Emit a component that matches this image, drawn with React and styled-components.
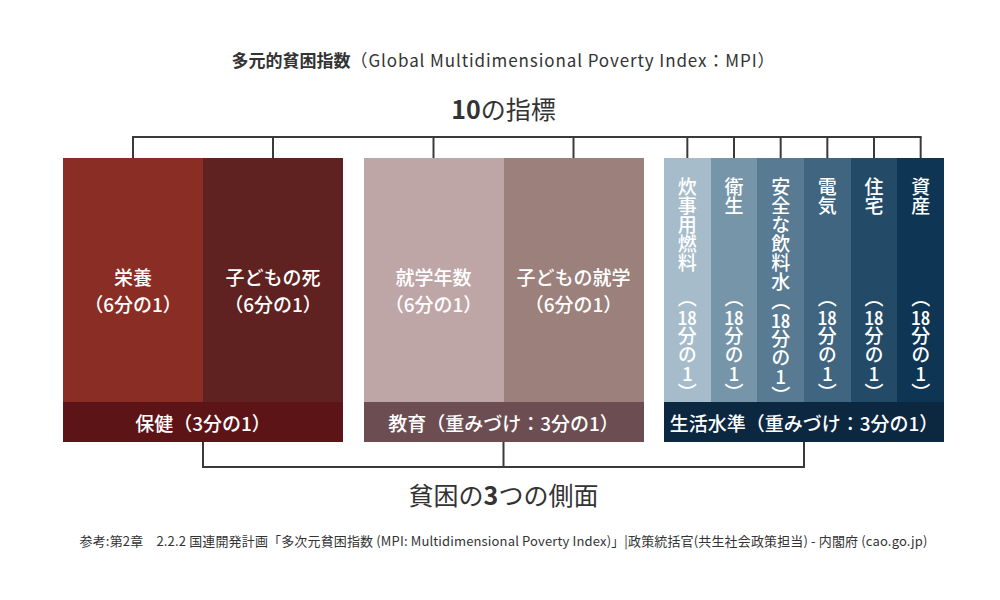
import React from 'react';
import styled, { createGlobalStyle } from 'styled-components';

const GlobalStyle = createGlobalStyle`
  body {
    margin: 0;
    background: #ffffff;
    font-family: "Noto Sans CJK JP", "Noto Sans", sans-serif;
  }
`;

const GROUP_WIDTH = 280;
const GROUP_GAP = 20.5;
const LINE = '#3a3a3a';

const groups = [
  {
    key: 'health',
    footer: '保健（3分の1）',
    footerColor: '#5c1416',
    vertical: false,
    items: [
      { label: '栄養', color: '#8a2d25' },
      { label: '子どもの死', color: '#5f2221' },
    ],
  },
  {
    key: 'education',
    footer: '教育（重みづけ：3分の1）',
    footerColor: '#6b4d52',
    vertical: false,
    items: [
      { label: '就学年数', color: '#bea6a7' },
      { label: '子どもの就学', color: '#9b807b' },
    ],
  },
  {
    key: 'living',
    footer: '生活水準（重みづけ：3分の1）',
    footerColor: '#0c2740',
    vertical: true,
    items: [
      { label: '炊事用燃料', color: '#a6bccb' },
      { label: '衛生', color: '#7795a8' },
      { label: '安全な飲料水', color: '#587b93' },
      { label: '電気', color: '#3f6580' },
      { label: '住宅', color: '#234b68' },
      { label: '資産', color: '#0f3554' },
    ],
  },
];

const CHART_WIDTH = GROUP_WIDTH * 3 + GROUP_GAP * 2;

const Page = styled.div`
  width: 1000px;
  height: 600px;
  overflow: hidden;
  box-sizing: border-box;
  padding: 48px 0 0 63px;
`;

const Chart = styled.div`
  width: ${CHART_WIDTH}px;
  display: flex;
  flex-direction: column;
  align-items: center;
  color: #333333;
`;

const Title = styled.h1`
  margin: 0;
  font-size: 17px;
  line-height: 24px;
  font-weight: 400;
  letter-spacing: 0.9px;
  white-space: nowrap;

  strong {
    font-weight: 700;
    letter-spacing: 0;
  }
`;

const Heading = styled.h2`
  margin: 21px 0 13px;
  font-size: 25px;
  line-height: 30px;
  font-weight: 400;
  white-space: nowrap;

  b {
    font-weight: 700;
  }
`;

const Connector = styled.svg`
  display: block;
  flex: none;
`;

const Groups = styled.div`
  display: flex;
  gap: ${GROUP_GAP}px;
  width: 100%;
`;

const Group = styled.div`
  width: ${GROUP_WIDTH}px;
  display: flex;
  flex-direction: column;
`;

const Columns = styled.div`
  display: flex;
  height: 244px;
`;

const Column = styled.div`
  flex: 1;
  display: flex;
  flex-direction: column;
  align-items: center;
  background: ${p => p.$color};
  color: #ffffff;
  font-size: 19px;
  font-weight: 500;
  line-height: 27px;
  padding-top: 105px;
  box-sizing: border-box;
`;

const VerticalColumn = styled.div`
  flex: 1;
  display: flex;
  flex-direction: column;
  align-items: center;
  justify-content: space-between;
  background: ${p => p.$color};
  color: #ffffff;
  font-size: 19px;
  font-weight: 500;
  padding: 19px 0 0;
  box-sizing: border-box;
`;

const VerticalText = styled.div`
  writing-mode: vertical-rl;
  text-orientation: upright;
  line-height: 1;
  white-space: nowrap;
`;

const Combined = styled.span`
  text-combine-upright: all;
`;

const Footer = styled.div`
  height: 40px;
  display: flex;
  align-items: center;
  justify-content: center;
  background: ${p => p.$color};
  color: #ffffff;
  font-size: 19px;
  font-weight: 500;
  white-space: nowrap;
`;

const Aspects = styled.div`
  margin-top: 11px;
  font-size: 25px;
  line-height: 30px;
  white-space: nowrap;

  b {
    font-weight: 700;
  }
`;

const Source = styled.p`
  margin: 23px 0 0;
  font-size: 13px;
  line-height: 18px;
  letter-spacing: 0.15px;
  color: #333333;
  white-space: nowrap;
`;

const groupLeft = i => i * (GROUP_WIDTH + GROUP_GAP);

const topTicks = groups.flatMap((g, gi) => {
  const w = GROUP_WIDTH / g.items.length;
  return g.items.map((_, ii) => groupLeft(gi) + w * ii + w / 2);
});

const bottomTicks = groups.map((_, gi) => groupLeft(gi) + GROUP_WIDTH / 2);

const TopBracket = () => (
  <Connector width={CHART_WIDTH} height={22}>
    <line x1={topTicks[0] - 1} y1={1} x2={topTicks[topTicks.length - 1] + 1} y2={1} stroke={LINE} strokeWidth={2} />
    {topTicks.map(x => (
      <line key={x} x1={x} y1={1} x2={x} y2={22} stroke={LINE} strokeWidth={2} />
    ))}
  </Connector>
);

const BottomBracket = () => (
  <Connector width={CHART_WIDTH} height={26}>
    <line x1={bottomTicks[0] - 1} y1={25} x2={bottomTicks[bottomTicks.length - 1] + 1} y2={25} stroke={LINE} strokeWidth={2} />
    {bottomTicks.map(x => (
      <line key={x} x1={x} y1={0} x2={x} y2={25} stroke={LINE} strokeWidth={2} />
    ))}
  </Connector>
);

const App = () => (
  <>
    <GlobalStyle />
    <Page>
      <Chart>
        <Title>
          <strong>多元的貧困指数</strong>（Global Multidimensional Poverty Index：MPI）
        </Title>
        <Heading>
          <b>10</b>の指標
        </Heading>
        <TopBracket />
        <Groups>
          {groups.map(g => (
            <Group key={g.key}>
              <Columns>
                {g.items.map(item =>
                  g.vertical ? (
                    <VerticalColumn key={item.label} $color={item.color}>
                      <VerticalText>{item.label}</VerticalText>
                      <VerticalText>
                        （<Combined>18</Combined>分の1）
                      </VerticalText>
                    </VerticalColumn>
                  ) : (
                    <Column key={item.label} $color={item.color}>
                      <div>{item.label}</div>
                      <div>（6分の1）</div>
                    </Column>
                  )
                )}
              </Columns>
              <Footer $color={g.footerColor}>{g.footer}</Footer>
            </Group>
          ))}
        </Groups>
        <BottomBracket />
        <Aspects>
          貧困の<b>3</b>つの側面
        </Aspects>
        <Source>
          参考:第2章　2.2.2 国連開発計画「多次元貧困指数 (MPI: Multidimensional Poverty Index)」|政策統括官(共生社会政策担当) - 内閣府 (cao.go.jp)
        </Source>
      </Chart>
    </Page>
  </>
);

export default App;
